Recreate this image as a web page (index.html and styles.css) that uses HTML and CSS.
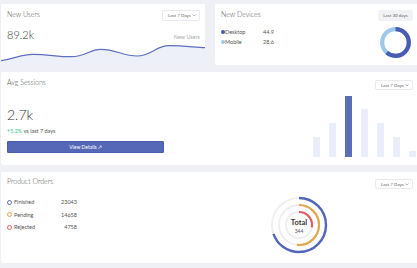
FILE: index.html
```html
<!DOCTYPE html>
<html>
<head>
    <title>Dashboard</title>
    <link rel="stylesheet" href="styles.css">
</head>
<body>
    <div class="dash">
        <div class="row-top">
            <section class="card users">
                <div class="card-head">
                    <h2 class="card-title">New Users</h2>
                    <div class="select">Last 7 Days <svg width="4" height="3" viewBox="0 0 4 3"><polyline points="0.5,0.5 2,2 3.5,0.5" fill="none" stroke="#999" stroke-width="0.7"/></svg></div>
                </div>
                <div class="users-stat">
                    <span class="big-num">89.2k</span>
                    <span class="muted-label">New Users</span>
                </div>
                <svg class="users-chart" width="204" height="23" viewBox="0 0 204 23" preserveAspectRatio="none">
                    <path d="M0,18.7 C16,16 20,12.3 32,12.3 C48,12.3 55,14.7 70,14.7 C85,14.7 88,7.3 100,7.3 C115,7.3 122,14 136,14 C150,14 155,3.7 168,3.7 C185,3.7 195,5.7 204,5.7 L204,23 L0,23 Z" fill="#eef0f9"/>
                    <path d="M0,18.7 C16,16 20,12.3 32,12.3 C48,12.3 55,14.7 70,14.7 C85,14.7 88,7.3 100,7.3 C115,7.3 122,14 136,14 C150,14 155,3.7 168,3.7 C185,3.7 195,5.7 204,5.7" fill="none" stroke="#5c6fc2" stroke-width="1.2"/>
                </svg>
            </section>

            <section class="card devices">
                <div class="card-head">
                    <h2 class="card-title">New Devices</h2>
                    <div class="pill">Last 30 days</div>
                </div>
                <div class="devices-body">
                    <ul class="legend">
                        <li><span class="dot dot-desktop"></span><span class="legend-name">Desktop</span><span>44.9</span></li>
                        <li><span class="dot dot-mobile"></span><span class="legend-name">Mobile</span><span>28.6</span></li>
                    </ul>
                    <svg class="donut" width="31" height="31" viewBox="0 0 31 31">
                        <circle cx="15.5" cy="15.5" r="13.3" fill="none" stroke="#9ec7ee" stroke-width="4.2"/>
                        <circle cx="15.5" cy="15.5" r="13.3" fill="none" stroke="#4a5cb2" stroke-width="4.2" stroke-dasharray="51 83.6" transform="rotate(-90 15.5 15.5)"/>
                    </svg>
                </div>
            </section>
        </div>

        <section class="card sessions">
            <div class="sessions-info">
                <h2 class="card-title">Avg Sessions</h2>
                <div class="sessions-num">2.7k</div>
                <div class="sessions-sub"><span class="up">+5.2%</span> vs last 7 days</div>
                <button class="details-btn">View Details &#8599;</button>
            </div>
            <div class="sessions-chart">
                <div class="select">Last 7 Days <svg width="4" height="3" viewBox="0 0 4 3"><polyline points="0.5,0.5 2,2 3.5,0.5" fill="none" stroke="#999" stroke-width="0.7"/></svg></div>
                <div class="bars">
                    <div class="bar" style="height: 20px"></div>
                    <div class="bar" style="height: 34px"></div>
                    <div class="bar bar-active" style="height: 61px"></div>
                    <div class="bar" style="height: 48px"></div>
                    <div class="bar" style="height: 34px"></div>
                    <div class="bar" style="height: 20px"></div>
                    <div class="bar" style="height: 6px"></div>
                </div>
            </div>
        </section>

        <section class="card orders">
            <div class="orders-info">
                <h2 class="card-title">Product Orders</h2>
                <ul class="status-list">
                    <li><span class="ring ring-blue"></span><span class="status-name">Finished</span><span class="status-val">23043</span></li>
                    <li><span class="ring ring-orange"></span><span class="status-name">Pending</span><span class="status-val">14658</span></li>
                    <li><span class="ring ring-red"></span><span class="status-name">Rejected</span><span class="status-val">4758</span></li>
                </ul>
            </div>
            <svg class="radial" width="58" height="58" viewBox="0 0 58 58">
                <circle cx="29" cy="29" r="27" fill="none" stroke="#efeff2" stroke-width="2"/>
                <circle cx="29" cy="29" r="20" fill="none" stroke="#efeff2" stroke-width="2"/>
                <circle cx="29" cy="29" r="13" fill="none" stroke="#efeff2" stroke-width="2"/>
                <circle cx="29" cy="29" r="27" fill="none" stroke="#5366b9" stroke-width="2.4" stroke-dasharray="117.8 169.6" transform="rotate(-90 29 29)"/>
                <circle cx="29" cy="29" r="20" fill="none" stroke="#e4a64c" stroke-width="2.2" stroke-dasharray="64.6 125.7" transform="rotate(-90 29 29)"/>
                <circle cx="29" cy="29" r="13" fill="none" stroke="#e55a5e" stroke-width="2.2" stroke-dasharray="22.7 81.7" transform="rotate(-90 29 29)"/>
                <text x="29" y="28.5" class="radial-title" text-anchor="middle">Total</text>
                <text x="29" y="37" class="radial-val" text-anchor="middle">344</text>
            </svg>
            <div class="select">Last 7 Days <svg width="4" height="3" viewBox="0 0 4 3"><polyline points="0.5,0.5 2,2 3.5,0.5" fill="none" stroke="#999" stroke-width="0.7"/></svg></div>
        </section>
    </div>
</body>
</html>
```

FILE: styles.css
```css
body {
    margin: 0;
    background: #eff0f5;
    font-family: Lato, "Open Sans", sans-serif;
    color: #444;
    overflow: hidden;
}

.dash {
    width: 419px;
    padding: 4px 0 0 1px;
    display: flex;
    flex-direction: column;
    gap: 7px;
}

.row-top {
    display: flex;
    gap: 10px;
    height: 61px;
}

.card {
    background: white;
    border-radius: 2px;
    box-sizing: border-box;
}

.card-title {
    margin: 0;
    font-size: 7px;
    line-height: 9px;
    font-weight: 300;
    color: #555;
}

.card-head {
    display: flex;
    justify-content: space-between;
    align-items: flex-start;
}

.select {
    width: 38px;
    height: 10px;
    box-sizing: border-box;
    border: 1px solid #e9e9ef;
    border-radius: 2px;
    font-size: 4.5px;
    color: #666;
    display: flex;
    justify-content: space-between;
    align-items: center;
    padding: 0 3px 0 5px;
    background: white;
}

/* New users */
.users {
    width: 204px;
    display: flex;
    flex-direction: column;
}

.users .card-head {
    padding: 6px 5px 0 6px;
}

.users .select {
    height: 11px;
}

.users-stat {
    display: flex;
    justify-content: space-between;
    align-items: baseline;
    padding: 0 5px 0 6px;
    margin-top: 7px;
}

.big-num {
    font-size: 11px;
    line-height: 13px;
    font-weight: 300;
    color: #333;
}

.muted-label {
    font-size: 5.5px;
    color: #aaa;
}

.users-chart {
    display: block;
    margin-top: auto;
}

/* New devices */
.devices {
    width: 205px;
}

.devices .card-head {
    padding: 6px 7px 0 6px;
}

.pill {
    width: 35px;
    height: 11px;
    background: #f1f2f5;
    border-radius: 2px;
    font-size: 4.5px;
    color: #666;
    display: flex;
    align-items: center;
    justify-content: center;
}

.devices-body {
    display: flex;
    justify-content: space-between;
    padding: 0 9px 0 6px;
    margin-top: 6px;
}

.legend {
    list-style: none;
    margin: 0;
    padding: 0;
    font-size: 5.5px;
    color: #555;
}

.legend li {
    display: flex;
    align-items: center;
    height: 10px;
}

.dot {
    width: 4px;
    height: 4px;
    border-radius: 50%;
}

.dot-desktop { background: #4759b0; }
.dot-mobile { background: #9ec7ee; }

.legend-name {
    width: 38px;
}

.donut {
    display: block;
}

/* Avg sessions */
.sessions {
    height: 93px;
    display: flex;
    padding: 6px 4px 8px 6px;
}

.sessions-info {
    width: 157px;
    display: flex;
    flex-direction: column;
}

.sessions-num {
    font-size: 14px;
    line-height: 16px;
    font-weight: 300;
    color: #333;
    margin-top: 20px;
}

.sessions-sub {
    font-size: 5.5px;
    line-height: 8px;
    color: #555;
    margin-top: 4px;
}

.up {
    color: #3cc48b;
}

.details-btn {
    margin-top: 6px;
    height: 12px;
    border: 1px solid #4a5dae;
    border-radius: 1px;
    background: #5568b8;
    color: white;
    font-family: inherit;
    font-size: 5px;
    padding: 0;
}

.sessions-chart {
    flex: 1;
    display: flex;
    flex-direction: column;
    align-items: flex-end;
    justify-content: space-between;
}

.sessions-chart .select {
    margin: 2px 3px 0 0;
}

.bars {
    display: flex;
    align-items: flex-end;
    gap: 9px;
}

.bar {
    width: 7px;
    background: #e9eef8;
}

.bar-active {
    background: #5c6db8;
}

/* Product orders */
.orders {
    height: 91px;
    display: flex;
    align-items: flex-start;
    padding: 5px 7px 0 6px;
}

.orders-info {
    width: 198px;
}

.status-list {
    list-style: none;
    margin: 10px 0 0;
    padding: 0;
    width: 70px;
    font-size: 5.5px;
    color: #555;
}

.status-list li {
    display: flex;
    align-items: center;
    height: 12.5px;
}

.ring {
    width: 3px;
    height: 3px;
    border-radius: 50%;
    border: 1px solid;
    margin-right: 2px;
}

.ring-blue { border-color: #5366b9; }
.ring-orange { border-color: #e4a64c; }
.ring-red { border-color: #e55a5e; }

.status-val {
    margin-left: auto;
}

.radial {
    display: block;
    margin: 19px 0 0 65px;
}

.radial-title {
    font-size: 7.5px;
    font-weight: 700;
    fill: #333;
}

.radial-val {
    font-size: 5px;
    fill: #555;
}

.orders .select {
    margin: 2px 0 0 auto;
}
```
